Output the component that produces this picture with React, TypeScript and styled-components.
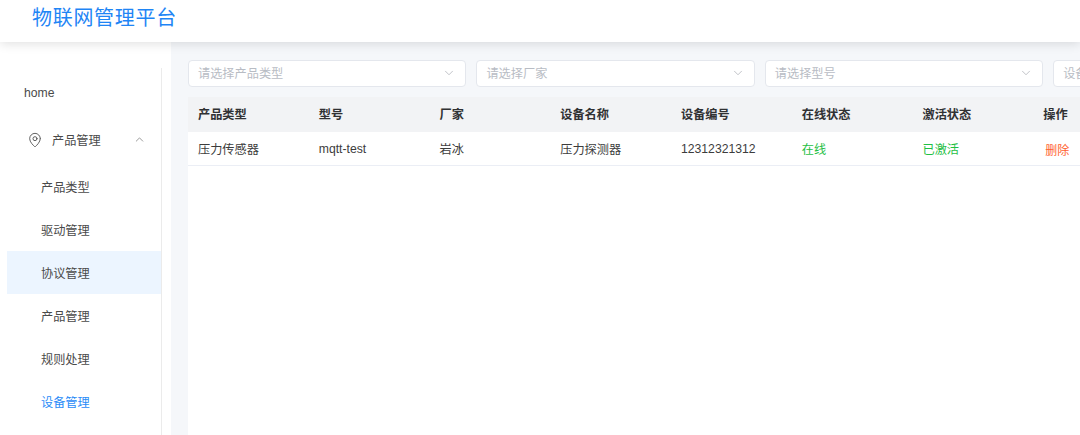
import React from 'react';
import styled, { createGlobalStyle } from 'styled-components';
import { MapPin, ChevronUp, ChevronDown } from 'lucide-react';

const GlobalStyle = createGlobalStyle`
  html, body {
    margin: 0;
    padding: 0;
    height: 435px;
    overflow: hidden;
    background: #fff;
    font-family: "Liberation Sans", "Noto Sans CJK SC", sans-serif;
    font-size: 12.2px;
    color: #303133;
  }
`;

const Page = styled.div`
  width: 1080px;
  height: 435px;
  display: flex;
  flex-direction: column;
  overflow: hidden;
`;

const Header = styled.header`
  position: relative;
  z-index: 2;
  flex: 0 0 42px;
  height: 42px;
  box-sizing: border-box;
  padding: 4px 0 0 32px;
  background: #fff;
  box-shadow: 0 2px 10px rgba(0, 0, 0, 0.12);
`;

const Title = styled.h1`
  margin: 0;
  font-size: 20px;
  font-weight: 400;
  line-height: 28px;
  letter-spacing: 0.7px;
  color: #1f85f5;
`;

const Body = styled.div`
  flex: 1;
  display: flex;
  min-height: 0;
`;

const Sidebar = styled.aside`
  flex: 0 0 171px;
  box-sizing: border-box;
  padding: 26px 9px 0 7px;
  background: #fff;
`;

const Menu = styled.nav`
  height: 100%;
  box-sizing: border-box;
  padding-top: 3px;
  border-right: 1px solid #ebebeb;
  color: #4a4a4a;
`;

const HomeItem = styled.div`
  height: 43px;
  display: flex;
  align-items: center;
  padding-left: 17px;
`;

const GroupTitle = styled.div`
  height: 51px;
  display: flex;
  align-items: center;
  padding-left: 20px;
  gap: 9px;
`;

const GroupArrow = styled.span`
  margin-left: auto;
  margin-right: 15px;
  display: flex;
  color: #666;
`;

const SubItem = styled.div<{ $hover?: boolean; $active?: boolean }>`
  height: 43px;
  display: flex;
  align-items: center;
  padding-left: 34px;
  background: ${({ $hover }) => ($hover ? '#ecf5ff' : 'transparent')};
  color: ${({ $active }) => ($active ? '#2a8bf7' : 'inherit')};
`;

const Main = styled.main`
  flex: 1;
  min-width: 0;
  box-sizing: border-box;
  padding: 18px 0 0 17px;
  background: #f5f7fa;
  overflow: hidden;
`;

const Filters = styled.div`
  display: flex;
  gap: 10px;
  margin-bottom: 10px;
`;

const Select = styled.div`
  flex: 0 0 278.4px;
  height: 27px;
  box-sizing: border-box;
  display: flex;
  align-items: center;
  justify-content: space-between;
  padding: 0 9px 1px 9px;
  background: #fff;
  border: 1px solid #e4e7ed;
  border-radius: 4px;
  color: #b8bcc4;
  svg {
    color: #a8abb2;
  }
`;

const TableWrap = styled.div`
  width: 966px;
  height: 338px;
  background: #fff;
`;

const Row = styled.div<{ $head?: boolean }>`
  display: grid;
  grid-template-columns: repeat(8, 120.75px);
  align-items: center;
  height: ${({ $head }) => ($head ? '35px' : '34px')};
  box-sizing: border-box;
  padding-bottom: ${({ $head }) => ($head ? '1px' : '0')};
  background: ${({ $head }) => ($head ? '#f2f3f5' : '#fff')};
  border-bottom: ${({ $head }) => ($head ? 'none' : '1px solid #ebeef5')};
  font-weight: ${({ $head }) => ($head ? 700 : 400)};
  color: ${({ $head }) => ($head ? '#303133' : '#3c3c3c')};
`;

const Cell = styled.div<{ $color?: string }>`
  padding-left: 10px;
  color: ${({ $color }) => $color || 'inherit'};
  white-space: nowrap;
`;

const DeleteLink = styled.a`
  display: block;
  padding: 2px 0 0 2px;
  font-size: 12px;
  color: #ff5f2e;
`;

const subItems = ['产品类型', '驱动管理', '协议管理', '产品管理', '规则处理', '设备管理'];
const filters = ['请选择产品类型', '请选择厂家', '请选择型号', '设备编号'];
const columns = ['产品类型', '型号', '厂家', '设备名称', '设备编号', '在线状态', '激活状态', '操作'];

const App: React.FC = () => (
  <Page>
    <GlobalStyle />
    <Header>
      <Title>物联网管理平台</Title>
    </Header>
    <Body>
      <Sidebar>
        <Menu>
          <HomeItem>home</HomeItem>
          <GroupTitle>
            <MapPin size={16} strokeWidth={1.3} />
            产品管理
            <GroupArrow>
              <ChevronUp size={13} strokeWidth={1.2} />
            </GroupArrow>
          </GroupTitle>
          {subItems.map((item, i) => (
            <SubItem key={item} $hover={i === 2} $active={i === 5}>
              {item}
            </SubItem>
          ))}
        </Menu>
      </Sidebar>
      <Main>
        <Filters>
          {filters.map((f) => (
            <Select key={f}>
              {f}
              <ChevronDown size={14} strokeWidth={1.2} />
            </Select>
          ))}
        </Filters>
        <TableWrap>
          <Row $head>
            {columns.map((c) => (
              <Cell key={c}>{c}</Cell>
            ))}
          </Row>
          <Row>
            <Cell>压力传感器</Cell>
            <Cell>mqtt-test</Cell>
            <Cell>岩冰</Cell>
            <Cell>压力探测器</Cell>
            <Cell>12312321312</Cell>
            <Cell $color="#1fc044">在线</Cell>
            <Cell $color="#1fc044">已激活</Cell>
            <Cell>
              <DeleteLink>删除</DeleteLink>
            </Cell>
          </Row>
        </TableWrap>
      </Main>
    </Body>
  </Page>
);

export default App;
